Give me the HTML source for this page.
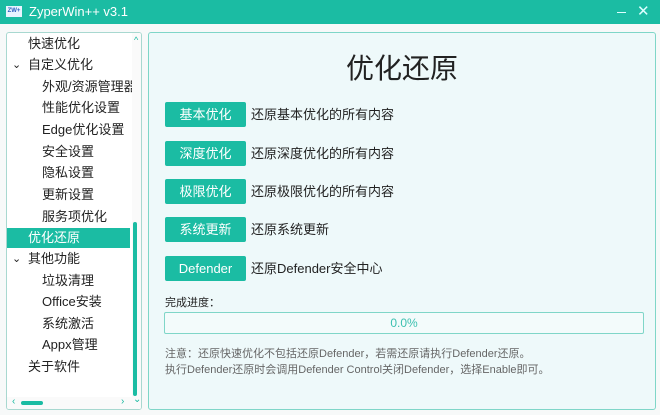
<!DOCTYPE html>
<html><head><meta charset="utf-8"><style>
*{margin:0;padding:0;box-sizing:border-box}
body{width:660px;height:415px;background:#f3f3f3;font-family:"Liberation Sans","Noto Sans CJK SC",sans-serif;position:relative;overflow:hidden;color:#222}
.tb{position:absolute;left:0;top:0;width:660px;height:24px;background:#1bbca3;color:#fff;font-size:13px}
.win{position:absolute;left:0;top:24px;width:660px;height:391px;background:#f7f9f9}
.left{position:absolute;left:6px;top:32px;width:136px;height:378px;background:#fff;border:1px solid #a8d8d0;border-radius:3px;overflow:hidden}
.it{position:absolute;font-size:13px;color:#222;white-space:nowrap;line-height:20px}
.right{position:absolute;left:148px;top:32px;width:508px;height:378px;background:#eef9fa;border:1px solid #7fd6c8;border-radius:3px}
.btn{position:absolute;left:16px;width:81px;height:25px;background:#1bbca3;color:#fff;font-size:13px;text-align:center;line-height:25px;border-radius:2px}
.desc{position:absolute;left:102px;font-size:13px;line-height:25px}
</style></head><body>
<div class="tb">
<div style="position:absolute;left:6px;top:6px;width:16px;height:11px;background:#e8f4ff;color:#3060c0;font-size:6px;line-height:11px;text-align:center;font-weight:bold">ZW+</div>
<div style="position:absolute;left:29px;top:4px">ZyperWin++ v3.1</div>
<div style="position:absolute;left:617px;top:12px;width:9px;height:1px;background:#dff"></div>
<div style="position:absolute;left:637px;top:2px;font-size:15px;color:#dff">✕</div>
</div>
<div class="win"></div>
<div class="left">
<div class="it" style="left:21px;top:1px">快速优化</div>
<div class="it" style="left:5px;top:22px;font-size:11px">⌄</div>
<div class="it" style="left:21px;top:22px">自定义优化</div>
<div class="it" style="left:35px;top:44px">外观/资源管理器</div>
<div class="it" style="left:35px;top:65px">性能优化设置</div>
<div class="it" style="left:35px;top:87px">Edge优化设置</div>
<div class="it" style="left:35px;top:109px">安全设置</div>
<div class="it" style="left:35px;top:130px">隐私设置</div>
<div class="it" style="left:35px;top:152px">更新设置</div>
<div class="it" style="left:35px;top:174px">服务项优化</div>
<div style="position:absolute;left:0;top:195px;width:123px;height:20px;background:#1bbca3"></div>
<div class="it" style="left:21px;top:195px;color:#fff">优化还原</div>
<div class="it" style="left:5px;top:216px;font-size:11px">⌄</div>
<div class="it" style="left:21px;top:216px">其他功能</div>
<div class="it" style="left:35px;top:238px">垃圾清理</div>
<div class="it" style="left:35px;top:259px">Office安装</div>
<div class="it" style="left:35px;top:281px">系统激活</div>
<div class="it" style="left:35px;top:302px">Appx管理</div>
<div class="it" style="left:21px;top:324px">关于软件</div>
<div style="position:absolute;left:125px;top:0;width:10px;height:378px;background:#fafafa"></div>
<div style="position:absolute;left:127px;top:2px;font-size:9px;color:#19b9a0">^</div>
<div style="position:absolute;left:126px;top:189px;width:4px;height:174px;background:#1bbca3;border-radius:2px"></div>
<div style="position:absolute;left:0;top:364px;width:136px;height:14px;background:#fafafa"></div>
<div style="position:absolute;left:5px;top:363px;font-size:10px;color:#19b9a0">‹</div>
<div style="position:absolute;left:14px;top:368px;width:22px;height:4px;background:#1bbca3;border-radius:2px"></div>
<div style="position:absolute;left:114px;top:363px;font-size:10px;color:#19b9a0">›</div>
<div style="position:absolute;left:126px;top:361px;font-size:10px;color:#19b9a0">⌄</div>
</div>
<div class="right">
<div style="position:absolute;left:0;width:506px;top:14px;text-align:center;font-size:28px;color:#222">优化还原</div>
<div class="btn" style="top:69px">基本优化</div><div class="desc" style="top:69px">还原基本优化的所有内容</div>
<div class="btn" style="top:108px">深度优化</div><div class="desc" style="top:108px">还原深度优化的所有内容</div>
<div class="btn" style="top:146px">极限优化</div><div class="desc" style="top:146px">还原极限优化的所有内容</div>
<div class="btn" style="top:184px">系统更新</div><div class="desc" style="top:184px">还原系统更新</div>
<div class="btn" style="top:223px">Defender</div><div class="desc" style="top:223px">还原Defender安全中心</div>
<div style="position:absolute;left:16px;top:261px;font-size:11px">完成进度：</div>
<div style="position:absolute;left:15px;top:279px;width:480px;height:22px;border:1px solid #7fd6c8;border-radius:2px;background:#f3fbfb;text-align:center;line-height:20px;font-size:12px;color:#3cc0b0">0.0%</div>
<div style="position:absolute;left:16px;top:313px;font-size:11px;color:#666;line-height:16px">注意：还原快速优化不包括还原Defender，若需还原请执行Defender还原。<br>执行Defender还原时会调用Defender Control关闭Defender，选择Enable即可。</div>
</div>
</body></html>
